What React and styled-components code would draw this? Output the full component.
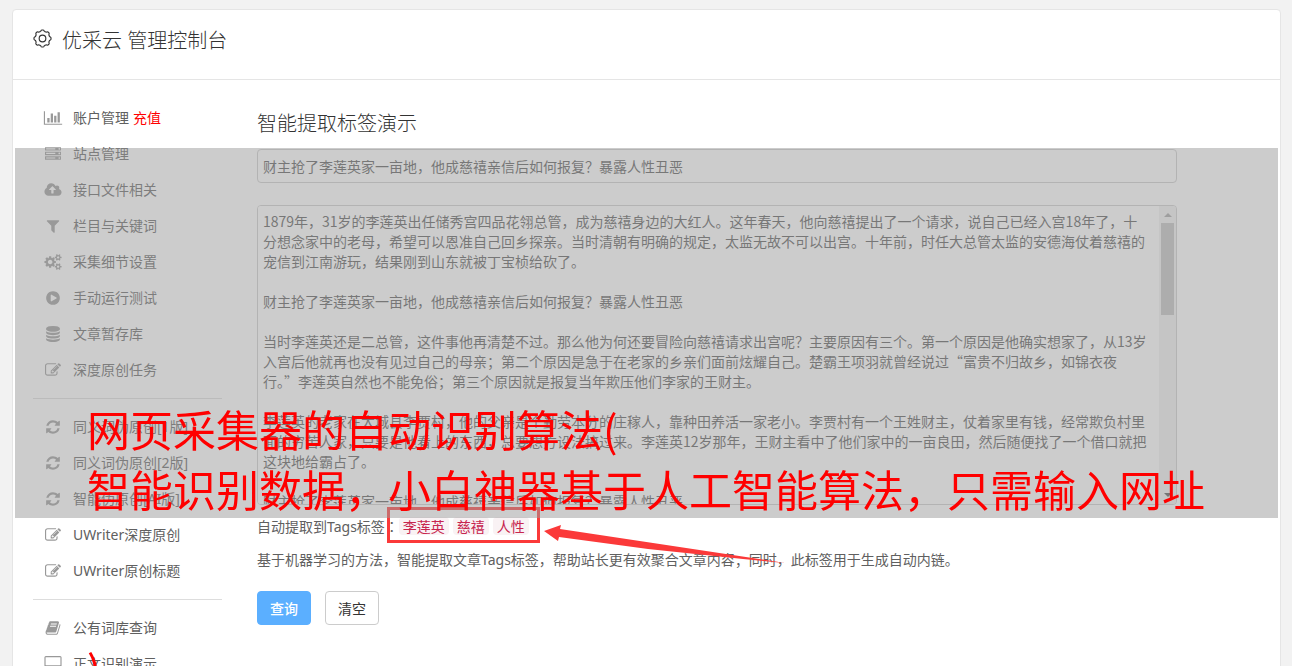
import React from 'react'
import styled, { createGlobalStyle } from 'styled-components'

const GlobalStyle = createGlobalStyle`
  * {
    box-sizing: border-box;
  }

  body {
    margin: 0;
    background-color: #f2f2f2;
    color: #606060;
    font-family: "Noto Sans", "Noto Sans CJK SC", sans-serif;
    font-size: 14px;
    line-height: 20px;
  }

  a {
    color: inherit;
    text-decoration: none;
  }
`

const Page = styled.div`
  position: relative;
  height: 100vh;
  padding: 9px 11px 0 12px;
  overflow: hidden;
`

const Card = styled.div`
  min-height: 100%;
  background-color: white;
  border: 1px solid #e5e5e5;
  border-radius: 4px;
`

const Header = styled.header`
  display: flex;
  align-items: flex-start;
  gap: 10px;
  height: 70px;
  padding: 15px 20px;
  border-bottom: 1px solid #e5e5e5;

  svg {
    margin: 4px 0 0 0;
  }
`

const Title = styled.h1`
  margin: 0;
  color: #333;
  font-size: 20px;
  font-weight: 300;
  line-height: 32px;
`

const Content = styled.div`
  display: grid;
  grid-template-columns: 189px 1fr;
  grid-gap: 35px;
  padding: 20px 103px 0 20px;
`

const Menu = styled.ul`
  margin: 0;
  padding: 0;
  list-style: none;
`

const MenuLink = styled.a`
  display: flex;
  align-items: center;
  height: 36px;
  padding: 0 0 0 10px;

  svg {
    margin: 0 10px 0 0;
    overflow: visible;
  }
`

const Recharge = styled.span`
  margin: 0 0 0 4px;
  color: #ff0000;
`

const Divider = styled.li`
  height: 1px;
  margin: 10px 0;
  background-color: #ddd;
`

const Form = styled.form`
  display: flex;
  flex-direction: column;
  padding: 8px 0 0 0;
`

const Heading = styled.h2`
  margin: 0 0 9px 0;
  color: #333;
  font-size: 20px;
  font-weight: 300;
  line-height: 32px;
`

const TitleInput = styled.input`
  height: 34px;
  padding: 6px 5px;
  border: 1px solid #ccc;
  border-radius: 4px;
  background-color: white;
  color: #555;
  font-family: "Noto Sans CJK SC", sans-serif;
  font-size: 14px;
`

const ArticleBox = styled.div`
  display: flex;
  height: 300px;
  margin: 22px 0 11px 0;
  border: 1px solid #ccc;
  border-radius: 4px;
  overflow: hidden;
`

const Article = styled.textarea`
  flex: 1;
  padding: 5px 9px 5px 5px;
  border: 0;
  background-color: white;
  color: #555;
  font-family: "Noto Sans CJK SC", sans-serif;
  font-size: 14px;
  line-height: 20px;
  resize: none;
  scrollbar-width: none;
`

const ScrollBar = styled.div`
  display: flex;
  flex-direction: column;
  align-items: center;
  width: 17px;
  padding: 7px 0;
  background-color: #f1f1f1;
`

const ScrollArrow = styled.span`
  border: 4px solid transparent;
  border-width: ${props => props.$down ? '4px 4px 0 4px' : '0 4px 4px 4px'};
  border-top-color: ${props => props.$down ? '#505050' : 'transparent'};
  border-bottom-color: ${props => props.$down ? 'transparent' : '#a3a3a3'};
`

const ScrollThumb = styled.span`
  width: 13px;
  height: 92px;
  margin: 6px 0 auto 0;
  background-color: #c1c1c1;
`

const TagRow = styled.div`
  position: relative;
  display: flex;
  align-items: center;
  height: 20px;
`

const TagList = styled.div`
  display: flex;
  gap: 4px;
`

/* the TC face centres the colon in its cell */
const Colon = styled.span`
  font-family: "Noto Sans CJK TC", sans-serif;
`

const Tag = styled.code`
  padding: 0 4px;
  border-radius: 4px;
  background-color: #f9f2f4;
  color: #c7254e;
  font-family: "Noto Sans CJK SC", monospace;
  font-size: 14px;
  line-height: 18px;
`

/* red frame round the tags, with its pointer */
const TagFrame = styled.div`
  position: absolute;
  left: 130px;
  top: -9px;
  width: 153px;
  height: 36px;
  border: 3px solid #fb3939;
`

const Pointer = styled.svg`
  position: absolute;
  left: 286px;
  top: 4px;
  z-index: 1;
`

const Hint = styled.p`
  margin: 14px 0 21px 0;
`

const ButtonGroup = styled.div`
  display: flex;
  gap: 14px;
`

const Button = styled.button`
  height: 34px;
  padding: 0 12px;
  border: 1px solid #ccc;
  border-radius: 4px;
  background-color: white;
  color: #333;
  font-family: inherit;
  font-size: 14px;

  &:hover {
    cursor: pointer;
  }
`

const ButtonPrimary = styled(Button)`
  border-color: #5bafff;
  background-color: #5bafff;
  color: white;
  font-weight: 500;
`

const Shade = styled.div`
  position: absolute;
  left: 15px;
  right: 14px;
  top: 148px;
  height: 370px;
  padding: 250px 0 0 72px;
  background-color: rgba(153, 153, 153, 0.5);
  pointer-events: none;
`

const Caption = styled.p`
  margin: 0;
  color: #ff0000;
  font-family: "Noto Sans CJK SC", sans-serif;
  font-size: 43px;
  line-height: 60px;
  white-space: pre;
`

const smallCog = 'v140q0 16-149 31-12 27-30 52 51 113 51 138 0 4-4 7-122 71-124 71-8 0-46-47t-52-68q-20 2-30 2t-30-2q-14 21-52 68t-46 47q-2 0-124-71-4-3-4-7 0-25 51-138-18-25-30-52-149-15-149-31v-140q0-16 149-31 13-29 30-52-51-113-51-138 0-4 4-7 4-2 35-20t59-34 30-16q8 0 46 46.5t52 67.5q20-2 30-2t30 2q51-71 92-112l6-2q4 0 124 70 4 3 4 7 0 25-51 138 17 23 30 52 149 15 149 31z'

// rings of the two small cogs are cut out by the even-odd rule of their winding
const icons = {
  chart: {
    width: 2048,
    d: 'M640 896v512H384V896h256zm384-512v1024H768V384h256zm1024 1152v128H0V128h128v1408h1920zm-640-896v768h-256V640h256zm384-384v1152h-256V256h256z'
  },
  server: {
    width: 1792,
    d: 'M128 1408h1024v-128H128v128zm0-512h1024V768H128v128zm1568 448q0-40-28-68t-68-28-68 28-28 68 28 68 68 28 68-28 28-68zM128 384h1024V256H128v128zm1568 448q0-40-28-68t-68-28-68 28-28 68 28 68 68 28 68-28 28-68zm0-512q0-40-28-68t-68-28-68 28-28 68 28 68 68 28 68-28 28-68zm96 832v384H0v-384h1792zm0-512v384H0V640h1792zm0-512v384H0V128h1792z'
  },
  upload: {
    width: 1920,
    d: 'M1280 864q0-14-9-23l-352-352q-9-9-23-9t-23 9l-351 351q-10 12-10 24 0 14 9 23t23 9h224v352q0 13 9.5 22.5t22.5 9.5h192q13 0 22.5-9.5t9.5-22.5v-352h224q13 0 22.5-9.5t9.5-22.5zm640 288q0 159-112.5 271.5t-271.5 112.5h-1088q-185 0-316.5-131.5t-131.5-316.5q0-130 70-240t188-165q-2-30-2-43 0-212 150-362t362-150q156 0 285.5 87t188.5 231q71-62 166-62 106 0 181 75t75 181q0 76-41 138 130 31 213.5 135.5t83.5 238.5z'
  },
  filter: {
    width: 1792,
    d: 'M1595 295q17 41-14 70l-493 493v742q0 42-39 59-13 5-25 5-27 0-45-19l-256-256q-19-19-19-45v-486l-493-493q-31-29-14-70 17-39 59-39h1280q42 0 59 39z'
  },
  cogs: {
    width: 1920,
    d: 'M896 896q0-106-75-181t-181-75-181 75-75 181 75 181 181 75 181-75 75-181zm768 512q0-52-38-90t-90-38-90 38-38 90q0 53 37.5 90.5t90.5 37.5 90.5-37.5 37.5-90.5zm0-1024q0-52-38-90t-90-38-90 38-38 90q0 53 37.5 90.5t90.5 37.5 90.5-37.5 37.5-90.5zm-384 421v185q0 10-7 19.5t-16 10.5l-155 24q-11 35-32 76 34 48 90 115 7 11 7 20 0 12-7 19-23 30-82.5 89.5t-78.5 59.5q-11 0-21-7l-115-90q-37 19-77 31-11 108-23 155-7 24-30 24h-186q-11 0-20-7.5t-10-17.5l-23-153q-34-10-75-31l-118 89q-7 7-20 7-11 0-21-8-144-133-144-160 0-9 7-19 10-14 41-53t47-61q-23-44-35-82l-152-24q-10-1-17-9.5t-7-19.5v-185q0-10 7-19.5t16-10.5l155-24q11-35 32-76-34-48-90-115-7-11-7-20 0-12 7-20 22-30 82-89t79-59q11 0 21 7l115 90q34-18 77-32 11-108 23-154 7-24 30-24h186q11 0 20 7.5t10 17.5l23 153q34 10 75 31l118-89q8-7 20-7 11 0 21 8 144 133 144 160 0 8-7 19-12 16-42 54t-45 60q23 48 34 82l152 23q10 2 17 10.5t7 19.5z' +
      'M1920 1338' + smallCog + 'M1920 314' + smallCog
  },
  play: {
    width: 1792,
    d: 'M896 128q209 0 385.5 103t279.5 279.5 103 385.5-103 385.5-279.5 279.5-385.5 103-385.5-103-279.5-279.5-103-385.5 103-385.5 279.5-279.5 385.5-103zm384 823q32-18 32-55t-32-55l-544-320q-31-19-64-1-32 19-32 56v640q0 37 32 56 16 8 32 8 17 0 32-9z'
  },
  database: {
    width: 1792,
    d: 'M896 768q237 0 443-43t325-127v170q0 69-103 128t-280 93.5-385 34.5-385-34.5-280-93.5-103-128v-170q119 84 325 127t443 43zm0 768q237 0 443-43t325-127v170q0 69-103 128t-280 93.5-385 34.5-385-34.5-280-93.5-103-128v-170q119 84 325 127t443 43zm0-384q237 0 443-43t325-127v170q0 69-103 128t-280 93.5-385 34.5-385-34.5-280-93.5-103-128v-170q119 84 325 127t443 43zm0-1152q208 0 385 34.5t280 93.5 103 128v128q0 69-103 128t-280 93.5-385 34.5-385-34.5-280-93.5-103-128v-128q0-69 103-128t280-93.5 385-34.5z'
  },
  edit: {
    width: 1792,
    d: 'M888 1184l116-116-152-152-116 116v56h96v96h56zm440-720q-16-16-33 1l-350 350q-17 17-1 33t33-1l350-350q17-17 1-33zm80 594v190q0 119-84.5 203.5t-203.5 84.5h-832q-119 0-203.5-84.5t-84.5-203.5v-832q0-119 84.5-203.5t203.5-84.5h832q63 0 117 25 15 7 18 23 3 17-9 29l-49 49q-14 14-32 8-23-6-45-6h-832q-66 0-113 47t-47 113v832q0 66 47 113t113 47h832q66 0 113-47t47-113v-126q0-13 9-22l64-64q15-15 35-7t20 29zm-96-738l288 288-672 672h-288v-288zm444 132l-92 92-288-288 92-92q28-28 68-28t68 28l152 152q28 28 28 68t-28 68z'
  },
  refresh: {
    width: 1792,
    d: 'M1639 1056q0 5-1 7-64 268-268 434.5t-478 166.5q-146 0-282.5-55t-243.5-157l-129 129q-19 19-45 19t-45-19-19-45v-448q0-26 19-45t45-19h448q26 0 45 19t19 45-19 45l-137 137q71 66 161 102t187 36q134 0 250-65t186-179q11-17 53-117 8-23 30-23h192q13 0 22.5 9.5t9.5 22.5zm25-800v448q0 26-19 45t-45 19h-448q-26 0-45-19t-19-45 19-45l138-138q-148-137-349-137-134 0-250 65t-186 179q-11 17-53 117-8 23-30 23h-199q-13 0-22.5-9.5t-9.5-22.5v-7q65-268 270-434.5t480-166.5q146 0 284 55.5t245 156.5l130-129q19-19 45-19t45 19 19 45z'
  },
  book: {
    width: 1792,
    d: 'M1703 478q40 57 18 129l-275 906q-19 64-76.5 107.5t-122.5 43.5h-923q-77 0-148.5-53.5t-99.5-131.5q-24-67-2-127 0-4 3-27t4-37q1-8-3-21.5t-3-19.5q2-11 8-21t16.5-23.5 16.5-23.5q23-38 45-91.5t30-91.5q3-10 .5-30t-.5-28q3-11 17-28t17-23q21-36 42-92t25-90q1-9-2.5-32t.5-28q4-13 22-30.5t22-22.5q19-26 42.5-84.5t27.5-96.5q1-8-3-25.5t-2-26.5q2-8 9-18t18-23 17-21q8-12 16.5-30.5t15-35 16-36 19.5-32 26.5-23.5 36-11.5 47.5 5.5l-1 3q38-9 51-9h761q74 0 114 56t18 130l-274 906q-36 119-71.5 153.5t-128.5 34.5h-869q-27 0-38 15-11 16-1 43 24 70 144 70h923q29 0 56-15.5t35-41.5l300-987q7-22 5-57 38 15 59 43zm-1064 2q-4 13 2 22.5t20 9.5h608q13 0 25.5-9.5t16.5-22.5l21-64q4-13-2-22.5t-20-9.5h-608q-13 0-25.5 9.5t-16.5 22.5zm-83 256q-4 13 2 22.5t20 9.5h608q13 0 25.5-9.5t16.5-22.5l21-64q4-13-2-22.5t-20-9.5h-608q-13 0-25.5 9.5t-16.5 22.5z'
  },
  desktop: {
    width: 1920,
    d: 'M1792 992v-832q0-13-9.5-22.5t-22.5-9.5h-1600q-13 0-22.5 9.5t-9.5 22.5v832q0 13 9.5 22.5t22.5 9.5h1600q13 0 22.5-9.5t9.5-22.5zm128-832v1088q0 66-47 113t-113 47h-544q0 37 16 77.5t32 71 16 43.5q0 26-19 45t-45 19h-512q-26 0-45-19t-19-45q0-14 16-44t32-70 16-78h-544q-66 0-113-47t-47-113v-1088q0-66 47-113t113-47h1600q66 0 113 47t47 113z'
  }
}

const menuGroups = [
  [
    { icon: 'chart', label: '账户管理', extra: '充值' },
    { icon: 'server', label: '站点管理' },
    { icon: 'upload', label: '接口文件相关' },
    { icon: 'filter', label: '栏目与关键词' },
    { icon: 'cogs', label: '采集细节设置' },
    { icon: 'play', label: '手动运行测试' },
    { icon: 'database', label: '文章暂存库' },
    { icon: 'edit', label: '深度原创任务' }
  ],
  [
    { icon: 'refresh', label: '同义词伪原创[1版]' },
    { icon: 'refresh', label: '同义词伪原创[2版]' },
    { icon: 'refresh', label: '智能伪原创[AI版]' },
    { icon: 'edit', label: 'UWriter深度原创' },
    { icon: 'edit', label: 'UWriter原创标题' }
  ],
  [
    { icon: 'book', label: '公有词库查询' },
    { icon: 'desktop', label: '正文识别演示' }
  ]
]

const articleTitle = '财主抢了李莲英家一亩地，他成慈禧亲信后如何报复？暴露人性丑恶'

const article = `1879年，31岁的李莲英出任储秀宫四品花翎总管，成为慈禧身边的大红人。这年春天，他向慈禧提出了一个请求，说自己已经入宫18年了，十分想念家中的老母，希望可以恩准自己回乡探亲。当时清朝有明确的规定，太监无故不可以出宫。十年前，时任大总管太监的安德海仗着慈禧的宠信到江南游玩，结果刚到山东就被丁宝桢给砍了。

${articleTitle}

当时李莲英还是二总管，这件事他再清楚不过。那么他为何还要冒险向慈禧请求出宫呢？主要原因有三个。第一个原因是他确实想家了，从13岁入宫后他就再也没有见过自己的母亲；第二个原因是急于在老家的乡亲们面前炫耀自己。楚霸王项羽就曾经说过“富贵不归故乡，如锦衣夜行。”李莲英自然也不能免俗；第三个原因就是报复当年欺压他们李家的王财主。

李莲英的老家在大城县李贾村，他的父亲是个勤劳本分的庄稼人，靠种田养活一家老小。李贾村有一个王姓财主，仗着家里有钱，经常欺负村里面的穷苦人家，只要是他看上的东西，总要想方设法搞过来。李莲英12岁那年，王财主看中了他们家中的一亩良田，然后随便找了一个借口就把这块地给霸占了。

${articleTitle}`

const tags = ['李莲英', '慈禧', '人性']

const caption = `网页采集器的自动识别算法(
智能识别数据，小白神器基于人工智能算法，只需输入网址


)`

const MenuIcon = ({ name }) => {
  const { width, d } = icons[name]

  // every glyph is centred on the same 20px column
  return (
    <svg width="20" height="16" viewBox={`${(width - 2240) / 2} 0 2240 1792`} fill="#999" aria-hidden="true">
      <path d={d} />
    </svg>
  )
}

// outline of a ring with eight soft bumps
const gearPath = () => {
  const points = []
  for (let i = 0; i <= 96; i++) {
    const angle = (i / 96) * Math.PI * 2
    const radius = 8.3 + 0.7 * Math.tanh(2 * Math.cos(angle * 8))
    points.push(`${(10 + radius * Math.sin(angle)).toFixed(2)} ${(10 - radius * Math.cos(angle)).toFixed(2)}`)
  }
  return `M${points.join('L')}Z`
}

const GearIcon = () => (
  <svg width="19" height="19" viewBox="0 0 20 20" fill="none" stroke="#333" strokeWidth="1.2" aria-hidden="true">
    <path d={gearPath()} strokeLinejoin="round" />
    <circle cx="10" cy="10" r="3.5" />
  </svg>
)

const App = () => {
  return (
    <>
      <GlobalStyle />
      <Page>
        <Card>
          <Header>
            <GearIcon />
            <Title>优采云 管理控制台</Title>
          </Header>

          <Content>
            <nav>
              <Menu>
                {menuGroups.map((group, index) => (
                  <React.Fragment key={index}>
                    {index > 0 && <Divider role="separator" />}
                    {group.map(item => (
                      <li key={item.label}>
                        <MenuLink href="#">
                          <MenuIcon name={item.icon} />
                          {item.label}
                          {item.extra && <Recharge>{item.extra}</Recharge>}
                        </MenuLink>
                      </li>
                    ))}
                  </React.Fragment>
                ))}
              </Menu>
            </nav>

            <Form onSubmit={e => e.preventDefault()}>
              <Heading id="demo-heading">智能提取标签演示</Heading>
              <TitleInput type="text" aria-labelledby="demo-heading" defaultValue={articleTitle} />
              <ArticleBox>
                <Article aria-labelledby="demo-heading" defaultValue={article} />
                <ScrollBar aria-hidden="true">
                  <ScrollArrow />
                  <ScrollThumb />
                  <ScrollArrow $down />
                </ScrollBar>
              </ArticleBox>

              <TagRow>
                <span>自动提取到Tags标签<Colon>：</Colon></span>
                <TagList>
                  {tags.map(tag => <Tag key={tag}>{tag}</Tag>)}
                </TagList>
                <TagFrame />
                <Pointer width="244" height="44" viewBox="0 0 244 44" fill="#fb3939" aria-hidden="true">
                  <path d="M1 11L18 5L17 9L110 23L242 43L200 39L105 29L16 17L15 21Z" />
                </Pointer>
              </TagRow>

              <Hint>基于机器学习的方法，智能提取文章Tags标签，帮助站长更有效聚合文章内容；同时，此标签用于生成自动内链。</Hint>

              <ButtonGroup>
                <ButtonPrimary type="submit">查询</ButtonPrimary>
                <Button type="reset">清空</Button>
              </ButtonGroup>
            </Form>
          </Content>
        </Card>

        <Shade>
          <Caption>{caption}</Caption>
        </Shade>
      </Page>
    </>
  )
}

export default App
